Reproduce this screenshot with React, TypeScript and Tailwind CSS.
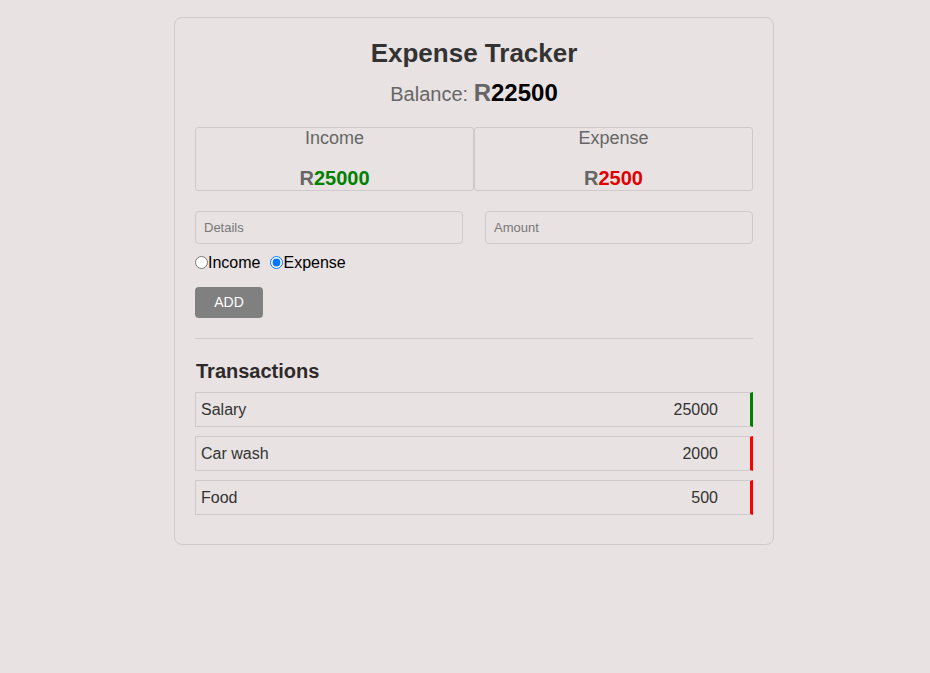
import React from "react";

type Tx = { name: string; amount: number; type: "income" | "expense" };

const transactions: Tx[] = [
  { name: "Salary", amount: 25000, type: "income" },
  { name: "Car wash", amount: 2000, type: "expense" },
  { name: "Food", amount: 500, type: "expense" },
];

export default function App() {
  const [kind, setKind] = React.useState<"income" | "expense">("expense");

  return (
    <div className="min-h-[673px] bg-[#e8e2e2] pt-[17px] pl-[18px] font-['Liberation_Sans',Arial,sans-serif]">
      <div className="mx-auto w-[600px] rounded-lg border border-[#cfcaca] px-5 pt-[17px] pb-[29px]">
        <h1 className="text-center text-[26px] font-bold leading-[36px] text-[#333]">Expense Tracker</h1>
        <div className="mt-[7px] text-center text-[20px] leading-[30px] text-[#666]">
          Balance: <span className="text-[24px] font-bold">R</span>
          <span className="text-[24px] font-bold text-black">22500</span>
        </div>

        <div className="mt-[18px] flex">
          <div className="flex h-[64px] flex-1 flex-col items-center rounded-[3px] border border-[#cfcaca]">
            <div className="text-[18px] leading-[20px] text-[#666]">Income</div>
            <div className="mt-[19px] text-[20px] font-bold leading-[22px] text-[#666]">
              R<span className="text-[#008000]">25000</span>
            </div>
          </div>
          <div className="flex h-[64px] flex-1 flex-col items-center rounded-[3px] border border-[#cfcaca]">
            <div className="text-[18px] leading-[20px] text-[#666]">Expense</div>
            <div className="mt-[19px] text-[20px] font-bold leading-[22px] text-[#666]">
              R<span className="text-[#e00000]">2500</span>
            </div>
          </div>
        </div>

        <div className="mt-5 flex gap-[22px]">
          <input
            placeholder="Details"
            className="h-[33px] flex-1 rounded-[4px] border border-[#cfcaca] bg-transparent px-[8px] text-[13px] placeholder:text-[#777] outline-none"
          />
          <input
            placeholder="Amount"
            className="h-[33px] flex-1 rounded-[4px] border border-[#cfcaca] bg-transparent px-[8px] text-[13px] placeholder:text-[#777] outline-none"
          />
        </div>

        <div className="mt-[9px] flex items-center text-[16px] leading-[19px] text-black">
          <label className="flex items-center">
            <input
              type="radio"
              name="kind"
              checked={kind === "income"}
              onChange={() => setKind("income")}
              className="m-0 h-[13px] w-[13px]"
            />
            Income
          </label>
          <label className="ml-[10px] flex items-center">
            <input
              type="radio"
              name="kind"
              checked={kind === "expense"}
              onChange={() => setKind("expense")}
              className="m-0 h-[13px] w-[13px]"
            />
            Expense
          </label>
        </div>

        <button className="mt-[15px] h-[31px] w-[68px] rounded-[4px] bg-[#808080] text-[14px] text-white">ADD</button>

        <div className="mt-[20px] border-t border-[#cfcaca]" />

        <h2 className="mt-[20px] pl-[1px] text-[20px] font-bold leading-[24px] text-[#2e2a2a]">Transactions</h2>

        <div className="mt-[9px] flex flex-col gap-[9px]">
          {transactions.map((t) => (
            <div
              key={t.name}
              className={
                "flex h-[35px] items-center justify-between border border-r-[3px] border-[#cfcaca] pl-[5px] pr-[32px] text-[16px] text-[#333] " +
                (t.type === "income" ? "border-r-[#008000]" : "border-r-[#ff0000]")
              }
            >
              <span>{t.name}</span>
              <span>{t.amount}</span>
            </div>
          ))}
        </div>
      </div>
    </div>
  );
}
